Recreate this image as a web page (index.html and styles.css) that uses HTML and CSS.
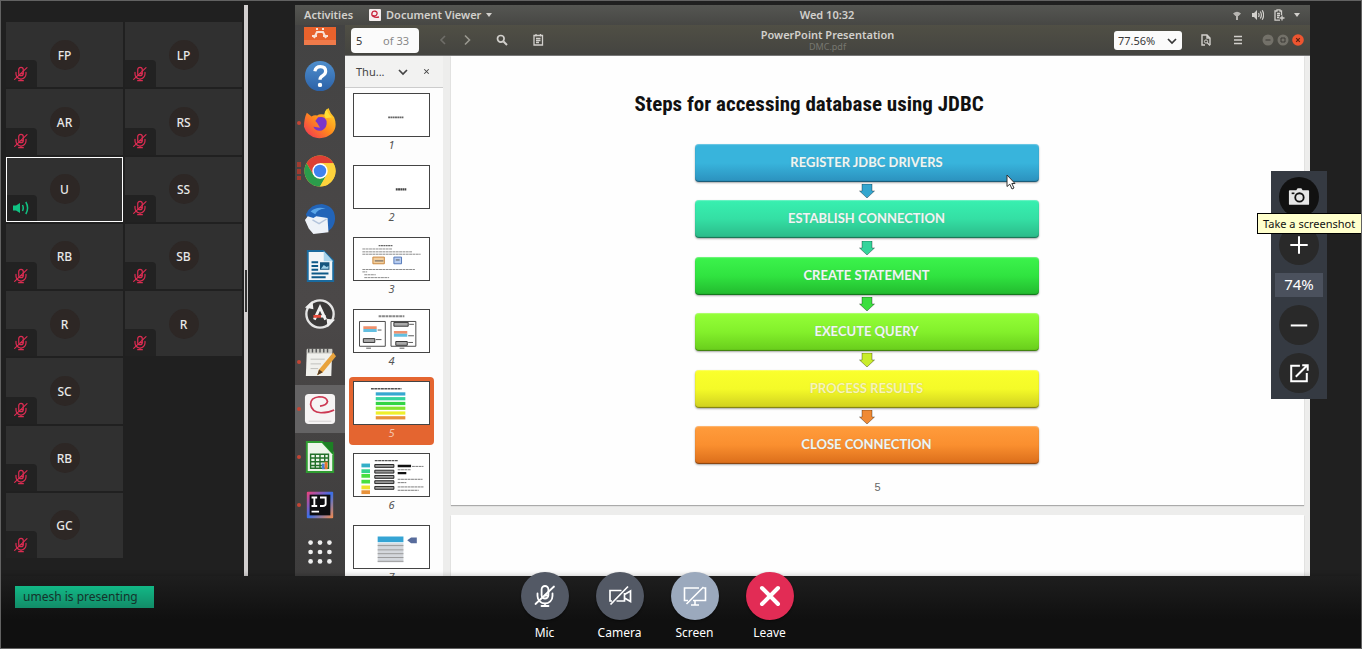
FILE: index.html
```html
<!DOCTYPE html>
<html lang="en">
<head>
<meta charset="utf-8">
<title>Meeting</title>
<link rel="stylesheet" href="styles.css">
</head>
<body>
<svg class="defs" aria-hidden="true">
  <defs>
    <symbol id="mic-off" viewBox="0 0 24 24">
      <g fill="none" stroke="currentColor" stroke-width="1.8" stroke-linecap="round">
        <rect x="8.6" y="2" width="6.8" height="12.5" rx="3.4"/>
        <path d="M4.5 9.5v2.5a7.5 7.5 0 0 0 15 0V9.5M12 19.5V22M8.5 22h7M12 11.5h3"/>
        <path d="M2.5 20L21 2.5"/>
      </g>
    </symbol>
    <linearGradient id="g-help" x2="0" y2="1"><stop stop-color="#4f8fcd"/><stop offset="1" stop-color="#2c62a8"/></linearGradient>
    <linearGradient id="g-fox" x1="1" x2="0" y1="0" y2="1"><stop stop-color="#ffe02e"/><stop offset=".5" stop-color="#ff8a1c"/><stop offset="1" stop-color="#f02a5c"/></linearGradient>
    <linearGradient id="g-ij" x2="1" y2="1"><stop stop-color="#f0407a"/><stop offset=".5" stop-color="#3a6fe8"/><stop offset="1" stop-color="#f58a4a"/></linearGradient>
  </defs>
</svg>
<div class="app">
  <main class="stage">
    <aside class="people" aria-label="Participants">
      <ul class="tiles">
        <li class="tile"><span class="avatar">FP</span><span class="badge"><svg><use href="#mic-off"/></svg></span></li>
        <li class="tile"><span class="avatar">LP</span><span class="badge"><svg><use href="#mic-off"/></svg></span></li>
        <li class="tile"><span class="avatar">AR</span><span class="badge"><svg><use href="#mic-off"/></svg></span></li>
        <li class="tile"><span class="avatar">RS</span><span class="badge"><svg><use href="#mic-off"/></svg></span></li>
        <li class="tile speaking"><span class="avatar">U</span><span class="badge"><svg viewBox="0 0 16 16"><path d="M0 5.500h3L7 3v10L3 10.500H0z" fill="currentColor"/><path d="M9.500 5c1 2 1 4 0 6M12.800 2c2.400 4 2.400 8 0 12" fill="none" stroke="currentColor" stroke-width="1.500"/></svg></span></li>
        <li class="tile"><span class="avatar">SS</span><span class="badge"><svg><use href="#mic-off"/></svg></span></li>
        <li class="tile"><span class="avatar">RB</span><span class="badge"><svg><use href="#mic-off"/></svg></span></li>
        <li class="tile"><span class="avatar">SB</span><span class="badge"><svg><use href="#mic-off"/></svg></span></li>
        <li class="tile"><span class="avatar">R</span><span class="badge"><svg><use href="#mic-off"/></svg></span></li>
        <li class="tile"><span class="avatar">R</span><span class="badge"><svg><use href="#mic-off"/></svg></span></li>
        <li class="tile first"><span class="avatar">SC</span><span class="badge"><svg><use href="#mic-off"/></svg></span></li>
        <li class="tile first"><span class="avatar">RB</span><span class="badge"><svg><use href="#mic-off"/></svg></span></li>
        <li class="tile first"><span class="avatar">GC</span><span class="badge"><svg><use href="#mic-off"/></svg></span></li>
      </ul>
    </aside>
    <div class="splitter"><span class="grip"></span></div>

    <section class="desktop" aria-label="Shared screen">
      <header class="topbar">
        <div class="top-left">
          <span>Activities</span>
          <span class="appname"><svg class="i12" viewBox="0 0 12 12"><rect width="12" height="12" rx="1" fill="#f4eeee"/><path d="M10 8C5 9 2 7 3 4s6-2 5 1-4 2-4 1" fill="none" stroke="#c8243c" stroke-width="1.3"/></svg>Document Viewer<svg class="caret" viewBox="0 0 6 4"><path d="M0 0h6L3 4z" fill="currentColor"/></svg></span>
        </div>
        <span>Wed 10:32</span>
        <div class="top-right">
          <svg class="i12" viewBox="0 0 12 12"><path d="M2 4.500q4-3.500 8 0L7.500 7h-3zM5 7h2v4H5z" fill="currentColor" opacity=".8"/></svg>
          <svg class="i12" viewBox="0 0 12 12"><path d="M0 4h2l3-3v10L2 8H0z" fill="currentColor"/><path d="M6.500 4q1.200 2 0 4M8.300 2.500q2.200 3.500 0 7M10.200 1.200q2.800 4.800 0 9.600" fill="none" stroke="currentColor" stroke-width="1.200"/></svg>
          <svg class="i12" viewBox="0 0 12 12"><path d="M8.500 6V2H7V.8H4V2H2v9.200h5M4 4.500h3M4 6.500h3M4 8.500h2M9 6.500v5M6.500 9h5" fill="none" stroke="currentColor" stroke-width="1.300"/></svg>
          <svg class="caret" viewBox="0 0 6 4"><path d="M0 0h6L3 4z" fill="currentColor"/></svg>
        </div>
      </header>
      <div class="workspace">
        <nav class="dock" aria-label="Dock">
          <svg class="software" viewBox="0 0 32 20"><path d="M0 0h32v18H0z" fill="#e8622c"/><path d="M0 13h32v5H0z" fill="#ef7a4a"/><path d="M10 11l3-6h6l3 6M8 9h5M19 9h5M12 2h2M18 2h2" fill="none" stroke="#f8e0d4" stroke-width="2"/></svg>
          <ul class="dock-list">
            <li><svg viewBox="0 0 34 34"><circle cx="17" cy="17" r="16" fill="url(#g-help)"/><path d="M11.500 12q1-5 6-5 5.500 0 5.500 5 0 3-3.500 5-2.500 1.500-2.500 4" fill="none" stroke="#fff" stroke-width="3.400"/><circle cx="17" cy="26.500" r="2.300" fill="#fff"/></svg></li>
            <li class="running"><svg viewBox="0 0 34 34"><path d="M3 6l5 4q3-2 6-1 2-2 8-1 0-4 4-7 2 6 6 10 4 10-2 17-7 6-16 5Q3 31 0 21 0 12 3 6z" fill="url(#g-fox)"/><path d="M15 11q7-2 9 4 1 7-5 10-7 1-9-4l7 1-3-5-2-2z" fill="#7a35c9"/><path d="M24 2q2 6 6 9l-7 1q-3-4 1-10z" fill="#ffdf35"/></svg></li>
            <li class="running many"><svg viewBox="0 0 34 34"><circle cx="17" cy="17" r="16.500" fill="#fdd23c"/><path d="M2.700 8.750A16.500 16.500 0 0 1 31.300 8.750H17L9.900 21.100z" fill="#dd3f34"/><path d="M2.700 8.750A16.500 16.500 0 0 0 17 33.500L24.100 21.100 17 25.200 9.900 21.100z" fill="#2b9c4b"/><path d="M31.300 8.750H17l7.100 12.350L17 33.500A16.500 16.500 0 0 0 31.300 8.750z" fill="#fdd23c"/><circle cx="17" cy="17" r="8.200" fill="#fff"/><circle cx="17" cy="17" r="6.600" fill="#3f82ee"/></svg></li>
            <li><svg viewBox="0 0 34 34"><path d="M2 12Q7 1 19 1q14 2 14 16-1 13-15 15Q9 30 6 22z" fill="#2264b8"/><path d="M7 9Q14 3 23 6 14 6 12 12z" fill="#5ba6e8"/><path d="M1 18l3-4 6 2 3-2 12 2 1 15-16 2-5-6z" fill="#eef2f8"/><path d="M9 18l7 4 8-5" fill="none" stroke="#b4c4dc" stroke-width="1.500"/></svg></li>
            <li><svg viewBox="0 0 34 34"><path d="M3 0h18l11 11v23H3z" fill="#1a6a9e"/><path d="M5 2h16l9 10v20H5z" fill="#f2f6f8"/><path d="M21 1l10 11H21z" fill="#a8d4ec"/><path d="M8 13h7M8 17h7M8 21h7M8 25h18M8 29h15" stroke="#0e5a88" stroke-width="2"/><path d="M17 13h10v8H17z" fill="#15557e"/><path d="M18 20l3-4 3 2 2-1v3z" fill="#9fd0e8"/></svg></li>
            <li><svg viewBox="0 0 34 34"><circle cx="17" cy="17" r="14.500" fill="#3a3838" stroke="#e4e4e4" stroke-width="2.500"/><path d="M1 10l8-7 1 9zM33 23l-8 8-1-9z" fill="#f0f0f0"/><path d="M11 23l6-13 6 13" fill="none" stroke="#f2f2f2" stroke-width="3"/><path d="M10 19.500h8" stroke="#e84b3c" stroke-width="3"/><path d="M18 19.500h5" stroke="#f2f2f2" stroke-width="2.500"/></svg></li>
            <li class="running"><svg viewBox="0 0 34 34"><path d="M3 4h27l-1 28H2z" fill="#f0f0ec"/><path d="M3 3h27v5H3z" fill="#cacac4"/><path d="M5 2v5M9 2v5M13 2v5M17 2v5M21 2v5M25 2v5" stroke="#555" stroke-width="1.500"/><path d="M7 14h15M7 19h11M7 24h8" stroke="#bdbdb9"/><path d="M31 7l3 4-14 17-6 3 2-6z" fill="#e8a33c"/><path d="M14 31l2-6 4 3z" fill="#584028"/></svg></li>
            <li class="running active"><svg viewBox="0 0 34 34"><rect x="1" y="1" width="32" height="32" rx="4" fill="#f6f4f4"/><path d="M17 14q7-1 8-5-1-5-9-5-9 1-9 8 1 8 11 9 8 0 14-3" fill="none" stroke="#cc3852" stroke-width="1.800"/><path d="M5 30h24" stroke="#d4d0d0"/></svg></li>
            <li class="running"><svg viewBox="0 0 34 34"><path d="M2 0h18l12 12v22H2z" fill="#2f9c31"/><path d="M4 2h15l11 12v18H4z" fill="#edf6ea"/><path d="M19 1h12v13z" fill="#1c8024"/><path d="M7 14h19v15H7zM7 18h19M7 22h19M7 26h12M12 14v15M17 14v15M22 14v8" fill="none" stroke="#22702a" stroke-width="1.500"/><path d="M19 30v-6h3v6z" fill="#4a7fd0"/><path d="M22 30v-8h3v8z" fill="#e87830"/></svg></li>
            <li class="running"><svg viewBox="0 0 34 34"><rect x="3" y="3" width="28" height="28" rx="1" fill="url(#g-ij)"/><path d="M6 6h22v22H6z" fill="#0d0d10"/><path d="M8 9h6M8 18h6M11 9v9M17 9h6v7q0 2-3 2h-3M8 24h8" fill="none" stroke="#fff" stroke-width="2"/></svg></li>
            <li><svg viewBox="0 0 34 34"><g fill="#eee"><circle cx="7" cy="7" r="2.500"/><circle cx="17" cy="7" r="2.500"/><circle cx="27" cy="7" r="2.500"/><circle cx="7" cy="17" r="2.500"/><circle cx="17" cy="17" r="2.500"/><circle cx="27" cy="17" r="2.500"/><circle cx="7" cy="27" r="2.500"/><circle cx="17" cy="27" r="2.500"/><circle cx="27" cy="27" r="2.500"/></g></svg></li>
          </ul>
        </nav>
        <div class="viewer">
          <header class="toolbar">
            <div class="tools">
              <label class="pager"><input type="text" value="5" aria-label="Page"><span>of 33</span></label>
              <button class="tool faint" aria-label="Previous page"><svg class="i12" viewBox="0 0 12 12"><path d="M8 2L4 6l4 4" fill="none" stroke="currentColor" stroke-width="1.600"/></svg></button>
              <button class="tool dim" aria-label="Next page"><svg class="i12" viewBox="0 0 12 12"><path d="M4 1.500L8.500 6 4 10.500" fill="none" stroke="currentColor" stroke-width="1.600"/></svg></button>
              <button class="tool wide" aria-label="Find"><svg class="i12" viewBox="0 0 12 12"><circle cx="4.800" cy="4.800" r="3.300" fill="none" stroke="currentColor" stroke-width="1.700"/><path d="M7.500 7.500L11 11" stroke="currentColor" stroke-width="2"/></svg></button>
              <button class="tool wide" aria-label="Annotate"><svg class="i12" viewBox="0 0 12 12"><path d="M2 1.500h8.500v9.500H2zM4 4.500h4.500M4 6.500h4.500M4 8.500h3M4 0v2.500M8.500 0v2.500" fill="none" stroke="currentColor" stroke-width="1.300"/></svg></button>
            </div>
            <div class="doc-title"><h1>PowerPoint Presentation</h1><p>DMC.pdf</p></div>
            <div class="tools right">
              <div class="zoom"><select aria-label="Zoom"><option>77.56%</option></select><svg viewBox="0 0 12 12"><path d="M2 4l4 4 4-4" fill="none" stroke="currentColor" stroke-width="1.700"/></svg></div>
              <button class="tool" aria-label="Find in document"><svg class="i12" viewBox="0 0 12 12"><path d="M5 11H2V1h5l3 3v7M7 1v3h3" fill="none" stroke="currentColor" stroke-width="1.400"/><circle cx="6" cy="7.500" r="1.600" fill="none" stroke="currentColor"/><path d="M7 8.500l3 3" stroke="currentColor" stroke-width="1.300"/></svg></button>
              <button class="tool" aria-label="Menu"><svg class="i12" viewBox="0 0 12 12"><path d="M2 2.500h8M2 6h8M2 9.500h8" stroke="currentColor" stroke-width="1.700"/></svg></button>
              <div class="window-buttons">
                <button aria-label="Minimize"><svg viewBox="0 0 12 12"><circle cx="6" cy="6" r="5.500" fill="#737169"/><path d="M3.500 6h5" stroke="#3c3b37"/></svg></button>
                <button aria-label="Maximize"><svg viewBox="0 0 12 12"><circle cx="6" cy="6" r="5.500" fill="#737169"/><path d="M4 4h4v4H4z" fill="none" stroke="#3c3b37"/></svg></button>
                <button aria-label="Close"><svg viewBox="0 0 12 12"><circle cx="6" cy="6" r="5.800" fill="#ee5530"/><path d="M4.200 4.200l3.600 3.600m0-3.600L4.200 7.800" stroke="#5a2010" stroke-width="1.200"/></svg></button>
              </div>
            </div>
          </header>
          <div class="document">
            <aside class="side">
              <div class="side-head"><span>Thu...</span><button aria-label="Panel"><svg viewBox="0 0 12 12"><path d="M2 4l4 4 4-4" fill="none" stroke="currentColor" stroke-width="1.700"/></svg></button><button class="small" aria-label="Close panel"><svg viewBox="0 0 12 12"><path d="M3 3l6 6m0-6L3 9" stroke="currentColor" stroke-width="1.400"/></svg></button></div>
              <ol class="thumbs">
                <li><a href="#p1"><svg viewBox="0 0 77 44"><path d="M35 24.500h16" stroke="#666" stroke-width="2" stroke-dasharray="2 .4"/></svg><span>1</span></a></li>
                <li><a href="#p2"><svg viewBox="0 0 77 44"><path d="M43 24.500h11" stroke="#444" stroke-width="2.500" stroke-dasharray="2 .4"/></svg><span>2</span></a></li>
                <li><a href="#p3"><svg viewBox="0 0 77 44"><path d="M25 8h15" stroke="#666" stroke-width="1.500" stroke-dasharray="2 .5"/><path d="M8 11.500h31M8 14.500h52M8 17h61M8 33h55M8 35.500h5M10 38.500h12M10 41.500h26" stroke="#888" stroke-dasharray="3 .5"/><path d="M19 20h12v7H19z" fill="#f3cf9e" stroke="#c8853c"/><path d="M41 20h8v7h-8z" fill="#b8cdf0" stroke="#5478b8"/><path d="M21 24h9M43 23h4" stroke="#555"/></svg><span>3</span></a></li>
                <li><a href="#p4"><svg viewBox="0 0 77 44"><path d="M25 6.500h27" stroke="#888" stroke-width="2" stroke-dasharray="3 .6"/><path d="M5 12h27v26H5zM38 12h26v26H38z" fill="none" stroke="#444"/><path d="M9 17h14v3H9zM41 22h14v3H41z" fill="#ee916e"/><path d="M9 20h14v3H9zM41 25h14v3H41z" fill="#64bfe0"/><path d="M9 30h12v4H9zM41 13h15v4H41zM43 33h12v4H43z" fill="#aaa" stroke="#333"/><path d="M24 21h4M22 31h6M57 15h5M56 27h6M56 34h5M12 40h5M47 40h5" stroke="#555"/></svg><span>4</span></a></li>
                <li class="current"><a href="#p5"><svg viewBox="0 0 77 44"><path d="M17 7h32" stroke="#555" stroke-width="1.500" stroke-dasharray="3 .5"/><path d="M22 12.500h31" stroke="#36a8d0" stroke-width="3.400"/><path d="M22 17.500h31" stroke="#34d49c" stroke-width="3.400"/><path d="M22 22.500h31" stroke="#32d445" stroke-width="3.400"/><path d="M22 27.500h31" stroke="#84e42e" stroke-width="3.400"/><path d="M22 32.500h31" stroke="#eef02c" stroke-width="3.400"/><path d="M22 37.500h31" stroke="#e8923a" stroke-width="3.400"/></svg><span>5</span></a></li>
                <li><a href="#p6"><svg viewBox="0 0 77 44"><path d="M21 7h24" stroke="#555" stroke-width="1.400" stroke-dasharray="3 .5"/><path d="M7 10h9v4H7z" fill="#33afc8"/><path d="M7 16h9v4H7z" fill="#34d48c"/><path d="M7 21h9v4H7zM7 27h9v4H7z" fill="#48df40"/><path d="M7 33h9v4H7z" fill="#eee22c"/><path d="M7 38h9v4H7z" fill="#e8923a"/><path d="M21 11h20v3H21zM21 17h20v3H21zM21 22.500h20v3H21zM21 28h20v3H21zM21 34h20v3H21z" fill="#999" stroke="#222"/><path d="M45 12.500h14M45 20h9" stroke="#111" stroke-width="2.500"/><path d="M60 13h12M45 16.500h14M45 26.500h26M45 30h9M45 34.500h27M45 38h22" stroke="#777" stroke-dasharray="3 .5"/></svg><span>6</span></a></li>
                <li><a href="#p7"><svg viewBox="0 0 77 44"><path d="M24 11h27v6H24z" fill="#35a4d4"/><path d="M24 18h27v20H24z" fill="#d4d7dc"/><path d="M24 20.500h27M24 25h27M24 29h27M24 33h27M24 37h27" stroke="#999"/><path d="M55 15l4-3h6v6h-6z" fill="#586c9c"/></svg><span>7</span></a></li>
              </ol>
            </aside>
            <div class="pages">
              <article class="page slide">
                <h2>Steps for accessing database using JDBC</h2>
                <div class="flow">
                  <div class="step blue">REGISTER JDBC DRIVERS<svg class="cursor" viewBox="0 0 10 16"><path d="M1 1v11.500l2.800-2.300L6 15l2-1-2.200-4.500H9z" fill="#fff" stroke="#333"/></svg></div>
                  <svg class="arrow c1" viewBox="0 0 16 14"><path d="M3 0h10v7h2.500L8 14 .5 7H3z"/></svg>
                  <div class="step mint">ESTABLISH CONNECTION</div>
                  <svg class="arrow c2" viewBox="0 0 16 14"><path d="M3 0h10v7h2.500L8 14 .5 7H3z"/></svg>
                  <div class="step green">CREATE STATEMENT</div>
                  <svg class="arrow c3" viewBox="0 0 16 14"><path d="M3 0h10v7h2.500L8 14 .5 7H3z"/></svg>
                  <div class="step lime">EXECUTE QUERY</div>
                  <svg class="arrow c4" viewBox="0 0 16 14"><path d="M3 0h10v7h2.500L8 14 .5 7H3z"/></svg>
                  <div class="step yellow">PROCESS RESULTS</div>
                  <svg class="arrow c5" viewBox="0 0 16 14"><path d="M3 0h10v7h2.500L8 14 .5 7H3z"/></svg>
                  <div class="step orange">CLOSE CONNECTION</div>
                </div>
                <p class="page-number">5</p>
              </article>
              <article class="page next"></article>
            </div>
          </div>
        </div>
      </div>
    </section>
  </main>

  <footer class="callbar">
    <p class="presenting">umesh is presenting</p>
    <div class="controls">
      <button class="control"><span class="disc"><svg><use href="#mic-off"/></svg></span>Mic</button>
      <button class="control"><span class="disc"><svg viewBox="0 0 24 24"><path d="M13.500 6.500H2v10.500h2M8.500 17H16.500V9M16.500 10.500L22.500 7v10.500l-6-3.500M2.500 20.500L20 2.500" fill="none" stroke="currentColor" stroke-width="1.700"/></svg></span>Camera</button>
      <button class="control"><span class="disc pale"><svg viewBox="0 0 24 24"><path d="M16 4H1.500v12.500H5M10 16.500h12.500V4h-2M12 17V20.500M8 21h8M3.500 20L20.500 3" fill="none" stroke="currentColor" stroke-width="1.600"/></svg></span>Screen</button>
      <button class="control"><span class="disc red"><svg viewBox="0 0 24 24"><path d="M4 4l16 16M20 4L4 20" stroke="currentColor" stroke-width="4" stroke-linecap="round"/></svg></span>Leave</button>
    </div>
  </footer>

  <div class="view-tools">
    <button class="round dark" aria-label="Take a screenshot"><svg viewBox="0 0 24 24"><path d="M2 4.500h7l1.500-2h4l1.500 2h6a1 1 0 0 1 1 1v14a1 1 0 0 1-1 1H2a1 1 0 0 1-1-1v-14a1 1 0 0 1 1-1z" fill="#e6e6e6"/><circle cx="12.500" cy="12.500" r="4.600" fill="none" stroke="#111" stroke-width="2"/><path d="M4 8h3" stroke="#111" stroke-width="1.800"/></svg></button>
    <button class="round" aria-label="Zoom in"><svg viewBox="0 0 24 24"><path d="M12 2.500v19M2.500 12h19" stroke="#fff" stroke-width="2.200"/></svg></button>
    <output class="percent">74%</output>
    <button class="round" aria-label="Zoom out"><svg viewBox="0 0 24 24"><path d="M3 12.500h18" stroke="#fff" stroke-width="2.200"/></svg></button>
    <button class="round" aria-label="Open in new window"><svg viewBox="0 0 24 24"><path d="M13 4H3.500v17H20.500V12M8.500 16L21 3.500M15.500 3.500H21.500V9.500" fill="none" stroke="#fff" stroke-width="2.200"/></svg></button>
    <span class="tooltip" role="tooltip">Take a screenshot</span>
  </div>
</div>
</body>
</html>
```
FILE: styles.css
```css
* { box-sizing: border-box; margin: 0; padding: 0; }
body { background: #202020; color: #fff; font-family: "Noto Sans", sans-serif; font-size: 12px; }
ul, ol { list-style: none; }
button { background: none; border: 0; color: inherit; font: inherit; }
svg { display: block; }
.defs { position: absolute; width: 0; height: 0; }
.app { position: relative; display: flex; flex-direction: column; height: 100vh; border: 1px solid #626262; overflow: hidden; }

.stage { flex: 1; min-height: 0; display: flex; padding-top: 4px; }
.people { width: 243px; padding: 17px 2px 18px 5px; }
.tiles { height: 100%; display: grid; grid-template-columns: 1fr 1fr; grid-template-rows: repeat(8, 1fr); gap: 2px; }
.tile { position: relative; display: flex; align-items: center; justify-content: center; background: #303030; min-height: 0; }
.tile.first { grid-column: 1; }
.tile.speaking { border: 1px solid #fff; }
.avatar { width: 30px; height: 30px; border-radius: 50%; background: #2d2725; color: #e8e8e8; font-weight: 500; line-height: 31px; text-align: center; }
.badge { position: absolute; left: 0; bottom: 0; width: 31px; height: 27px; padding-right: 1px; border-radius: 0 4px 0 0; background: #222; color: #dc2c52; display: flex; align-items: center; justify-content: center; }
.badge svg { width: 16px; height: 16px; }
.speaking .badge { width: 30px; height: 26px; padding-right: 3px; color: #10c383; }
.splitter { width: 4px; background: #d2cfcf; display: flex; align-items: center; justify-content: center; }
.grip { width: 2px; height: 42px; background: #333; }

.desktop { flex: 1; min-width: 0; margin: 0 51px 0 47px; display: flex; flex-direction: column; background: #fdfdfd; color: #d2d0cc; overflow: hidden; }
.topbar { flex: none; height: 20px; padding: 0 10px 0 9px; display: grid; grid-template-columns: 1fr auto 1fr; align-items: center; background: linear-gradient(#555652, #474744); font: 600 11px/20px "Noto Sans", sans-serif; }
.topbar > span { padding-left: 50px; }
.top-left, .appname, .top-right { display: flex; align-items: center; }
.top-left { gap: 16px; }
.appname { gap: 5px; }
.top-right { justify-content: flex-end; gap: 9px; }
.i12 { width: 12px; height: 12px; }
.caret { width: 6px; height: 4px; }
.workspace { flex: 1; min-height: 0; display: flex; }
.dock { width: 50px; flex: none; display: flex; flex-direction: column; background: linear-gradient(#434343, #4b4848 50%, #3e3d3d); }
.software { width: 32px; height: 20px; margin: 2px 9px 5px; }
.dock-list { flex: 1; display: grid; grid-template-rows: repeat(11, 1fr); }
.dock-list li { position: relative; display: flex; align-items: center; justify-content: center; }
.dock-list svg { width: 32px; height: 32px; }
.dock-list .active { background: #646364; }
.running::before { content: ""; position: absolute; left: 2px; width: 4px; height: 4px; border-radius: 50%; background: #c44534; }
.running.many::before { height: 18px; border-radius: 0; background: repeating-linear-gradient(#a13b30 0 5px, #484545 5px 7px); }

.viewer { flex: 1; min-width: 0; display: flex; flex-direction: column; }
.toolbar { flex: none; height: 31px; padding: 0 6px; display: grid; grid-template-columns: 1fr auto 1fr; align-items: center; background: linear-gradient(#504f45, #444440); border-bottom: 1px solid #777; }
.tools { display: flex; align-items: center; }
.tools.right { justify-content: flex-end; }
.tool { width: 24px; height: 28px; display: flex; align-items: center; justify-content: center; }
.tool.wide { width: 36px; }
.tool.wide:nth-child(4) { margin-left: 5px; }
.tool.faint { color: #6f6e69; margin-left: 12px; }
.tool.dim { color: #9b9991; }
.tools.right .tool { width: 32px; }
.pager { width: 68px; height: 25px; padding: 0 10px 0 5px; display: flex; align-items: center; justify-content: space-between; border-radius: 4px; background: #fbfbfb; color: #888; font-size: 11px; }
.pager input { width: 20px; border: 0; background: none; color: #333; font: inherit; }
.doc-title { text-align: center; }
.doc-title h1 { font-size: 11px; line-height: 13px; font-weight: 600; }
.doc-title p { color: #777770; font-size: 9px; line-height: 11px; }
.zoom { position: relative; width: 68px; height: 19px; margin-right: 8px; color: #383838; }
.zoom select { appearance: none; width: 100%; height: 100%; padding-left: 4px; border: 0; border-radius: 3px; background: #fbfbfb; color: inherit; font: 11px "Noto Sans", sans-serif; }
.zoom svg { position: absolute; right: 4px; top: 4px; width: 12px; height: 12px; pointer-events: none; }
.window-buttons { display: flex; gap: 3px; margin-left: 8px; }
.window-buttons svg { width: 12px; height: 12px; }

.document { flex: 1; min-height: 0; display: flex; overflow: hidden; }
.side { width: 98px; flex: none; background: #fdfdfd; color: #444; }
.side-head { height: 32px; padding: 0 12px 0 11px; display: flex; align-items: center; justify-content: space-between; background: #f2f2f1; border-bottom: 1px solid #ccc; font-size: 11px; }
.side-head svg { width: 12px; height: 12px; }
.side-head .small svg { width: 9px; height: 9px; }
.thumbs { padding: 1px 9px 0 4px; }
.thumbs li { height: 68px; margin-bottom: 4px; padding: 4px; border-radius: 4px; }
.thumbs a { display: block; color: #555; text-decoration: none; }
.thumbs svg { width: 77px; height: 44px; background: #fff; border: 1px solid #444; }
.thumbs span { display: block; text-align: center; font: italic 11px/16px "Noto Sans", sans-serif; }
.thumbs .current { background: #e46530; }
.current a { color: #f4c4ac; }
.pages { flex: 1; min-width: 0; padding: 0 6px 0 8px; display: flex; flex-direction: column; gap: 10px; background: #ededec; overflow: hidden; }
.page { background: #fefefe; box-shadow: 0 1px 1px #aaa; }
.page.next { flex: 1; }
.slide { flex: none; padding: 34px 0 9px; color: #111; }
.slide h2 { padding-right: 137px; text-align: center; font: 700 21px/28px "Liberation Sans Narrow", "Roboto Condensed", Roboto, sans-serif; }
.flow { width: 366px; height: 320px; max-width: 100%; margin: 26px auto 0; padding-right: 22px; display: flex; flex-direction: column; justify-content: space-between; align-items: center; }
.step { position: relative; width: 100%; height: 38px; border-radius: 4px; color: #eef6f4; font: 700 13px/36px Lato, sans-serif; text-align: center; text-shadow: 0 0 1px #8888; box-shadow: inset 0 -1px 1px #0006, inset 0 1px 1px #fff4, 0 1px 2px #0005; }
.blue { background: linear-gradient(#38b4dc 50%, #2b90bd); }
.mint { background: linear-gradient(#38f0b0, #34dfa4 50%, #2bb988); }
.green { background: linear-gradient(#3cf34c, #30e340 50%, #22b92e); }
.lime { background: linear-gradient(#94ff38, #83f02b 50%, #68cc1b); }
.yellow { background: linear-gradient(#faff2c, #f4fa28 50%, #cfcf20); color: #faf6b4; }
.orange { background: linear-gradient(#ff9c3c, #fa8f2f 50%, #da6d1a); }
.arrow { width: 16px; height: 14px; stroke: #0005; stroke-width: 1; }
.c1 { fill: #34a6cf; }
.c2 { fill: #34d49b; }
.c3 { fill: #3bdf3f; }
.c4 { fill: #c9ed2c; }
.c5 { fill: #f08a34; }
.cursor { position: absolute; right: 23px; bottom: -8px; width: 10px; height: 16px; }
.page-number { margin-top: 14px; text-align: center; color: #666; font: 11px/18px "Liberation Sans", sans-serif; }

.callbar { position: relative; flex: none; height: 72px; display: flex; justify-content: center; padding-right: 48px; background: linear-gradient(#1e1e1e, #101010 60%); box-shadow: 0 -1px 5px #0003; }
.presenting { position: absolute; left: 14px; top: 10px; height: 22px; padding: 0 16px 0 8px; background: linear-gradient(#12b886, #128c68); color: #14332b; font-size: 12px; line-height: 21px; }
.controls { display: flex; margin-top: -4px; }
.control { width: 75px; display: flex; flex-direction: column; align-items: center; gap: 4px; line-height: 17px; }
.disc { width: 48px; height: 48px; border-radius: 50%; background: #535965; display: flex; align-items: center; justify-content: center; box-shadow: 0 1px 2px #0008; }
.disc svg { width: 24px; height: 24px; }
.disc.pale { background: #9ba9bd; }
.disc.red { background: #e22c55; }

.view-tools { position: absolute; right: 34px; top: 170px; width: 56px; padding: 6px 4px; display: flex; flex-direction: column; align-items: center; gap: 8px; background: #353a42; }
.round { width: 40px; height: 40px; border-radius: 50%; background: #292929; display: flex; align-items: center; justify-content: center; }
.round.dark { background: #111; }
.round svg { width: 22px; height: 22px; }
.percent { align-self: stretch; height: 24px; background: #4b515d; font-size: 15px; line-height: 23px; text-align: center; }
.tooltip { position: absolute; right: -36px; top: 42px; width: 106px; height: 21px; padding-left: 5px; background: #ffffcc; border: 1px solid #000; color: #111; font-size: 11px; line-height: 19px; white-space: nowrap; }
```
